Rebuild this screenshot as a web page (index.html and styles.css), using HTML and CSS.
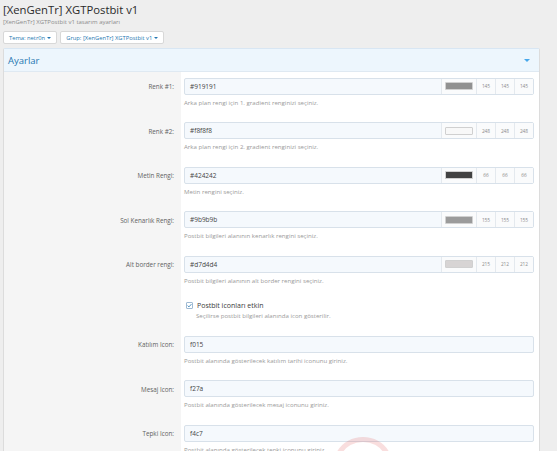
FILE: index.html
```html
<!DOCTYPE html>
<html lang="tr">
<head>
  <meta charset="UTF-8">
  <title>[XenGenTr] XGTPostbit v1</title>
  <link rel="stylesheet" href="styles.css">
</head>
<body>

  <div class="page">
    <h1 class="page-title">[XenGenTr] XGTPostbit v1</h1>
    <div class="page-desc">[XenGenTr] XGTPostbit v1 tasarım ayarları</div>

    <div class="filters">
      <span class="filter-btn">Tema: netr0n <i class="caret"></i></span>
      <span class="filter-btn">Grup: [XenGenTr] XGTPostbit v1 <i class="caret"></i></span>
    </div>

    <div class="block">
      <div class="block-header">
        <span>Ayarlar</span>
        <i class="caret caret-big"></i>
      </div>

      <div class="form-row">
        <div class="form-label">Renk #1:</div>
        <div class="form-field">
          <div class="input color-input">
            <span class="value">#919191</span>
            <span class="swatch-cell"><span class="swatch" style="background:#919191"></span></span>
            <span class="rgb">145</span><span class="rgb">145</span><span class="rgb">145</span>
          </div>
          <div class="help">Arka plan rengi için 1. gradient renginizi seçiniz.</div>
        </div>
      </div>

      <div class="form-row">
        <div class="form-label">Renk #2:</div>
        <div class="form-field">
          <div class="input color-input">
            <span class="value">#f8f8f8</span>
            <span class="swatch-cell"><span class="swatch" style="background:#f8f8f8"></span></span>
            <span class="rgb">248</span><span class="rgb">248</span><span class="rgb">248</span>
          </div>
          <div class="help">Arka plan rengi için 2. gradient renginizi seçiniz.</div>
        </div>
      </div>

      <div class="form-row">
        <div class="form-label">Metin Rengi:</div>
        <div class="form-field">
          <div class="input color-input">
            <span class="value">#424242</span>
            <span class="swatch-cell"><span class="swatch" style="background:#424242"></span></span>
            <span class="rgb">66</span><span class="rgb">66</span><span class="rgb">66</span>
          </div>
          <div class="help">Metin rengini seçiniz.</div>
        </div>
      </div>

      <div class="form-row">
        <div class="form-label">Sol Kenarlık Rengi:</div>
        <div class="form-field">
          <div class="input color-input">
            <span class="value">#9b9b9b</span>
            <span class="swatch-cell"><span class="swatch" style="background:#9b9b9b"></span></span>
            <span class="rgb">155</span><span class="rgb">155</span><span class="rgb">155</span>
          </div>
          <div class="help">Postbit bilgileri alanının kenarlık rengini seçiniz.</div>
        </div>
      </div>

      <div class="form-row">
        <div class="form-label">Alt border rengi:</div>
        <div class="form-field">
          <div class="input color-input">
            <span class="value">#d7d4d4</span>
            <span class="swatch-cell"><span class="swatch" style="background:#d7d4d4"></span></span>
            <span class="rgb">215</span><span class="rgb">212</span><span class="rgb">212</span>
          </div>
          <div class="help">Postbit bilgileri alanının alt border rengini seçiniz.</div>
        </div>
      </div>

      <div class="form-row check-row">
        <div class="form-label"></div>
        <div class="form-field">
          <label class="check">
            <span class="checkbox">
              <svg viewBox="0 0 8 8" width="7" height="7"><path d="M1.8 4.1 L3.4 5.6 L6.2 2.4" fill="none" stroke="#2577b1" stroke-width="0.9"/></svg>
            </span>
            <span>Postbit iconları etkin</span>
          </label>
          <div class="help check-help">Seçilirse postbit bilgileri alanında icon gösterilir.</div>
        </div>
      </div>

      <div class="form-row">
        <div class="form-label">Katılım Icon:</div>
        <div class="form-field">
          <div class="input"><span class="value">f015</span></div>
          <div class="help">Postbit alanında gösterilecek katılım tarihi iconunu giriniz.</div>
        </div>
      </div>

      <div class="form-row">
        <div class="form-label">Mesaj Icon:</div>
        <div class="form-field">
          <div class="input"><span class="value">f27a</span></div>
          <div class="help">Postbit alanında gösterilecek mesaj iconunu giriniz.</div>
        </div>
      </div>

      <div class="form-row">
        <div class="form-label">Tepki Icon:</div>
        <div class="form-field">
          <div class="input"><span class="value">f4c7</span></div>
          <div class="help">Postbit alanında gösterilecek tepki iconunu giriniz.</div>
        </div>
      </div>
    </div>
  </div>

  <svg class="watermark" width="56" height="22" viewBox="0 0 56 22">
    <path d="M4 22 C 14 4, 42 4, 52 22" fill="none" stroke="#e05a5a" stroke-width="5" opacity="0.2"/>
  </svg>

</body>
</html>
```

FILE: styles.css
```css
html, body {
  margin: 0;
  background: #eeeeee;
  font-family: "Open Sans", "Noto Sans", sans-serif;
  color: #141414;
  overflow: hidden;
}

.page {
  padding: 1px 17px 0 3px;
}

.page-title {
  margin: 0;
  font-size: 11.3px;
  font-weight: 400;
  line-height: 17px;
  color: #2a2a2a;
}

.page-desc {
  font-size: 6px;
  line-height: 9px;
  color: #8c8c8c;
}

.filters {
  display: flex;
  gap: 3px;
  margin-top: 4px;
}

.filter-btn {
  display: flex;
  align-items: center;
  gap: 2px;
  height: 11px;
  padding: 0 5px;
  background: #fff;
  border: 1px solid #d8d8d8;
  border-radius: 2px;
  font-size: 5.8px;
  color: #2577b1;
}

.caret {
  display: inline-block;
  width: 0;
  height: 0;
  border-left: 2px solid transparent;
  border-right: 2px solid transparent;
  border-top: 2.5px solid #2577b1;
}

.caret-big {
  border-left-width: 3px;
  border-right-width: 3px;
  border-top: 3.5px solid #47a7eb;
}

.block {
  margin-top: 4px;
  background: #f5f5f5;
  border: 1px solid #dcdcdc;
  border-top-color: #d8e6f3;
  border-radius: 2px;
}

.block-header {
  display: flex;
  align-items: center;
  justify-content: space-between;
  height: 22px;
  padding: 0 9px 0 4px;
  background: #edf6fd;
  border-bottom: 1px solid #dfe9f2;
  font-size: 9.5px;
  color: #2577b1;
}

.form-row {
  display: flex;
}

.form-label {
  width: 177px;
  flex-shrink: 0;
  box-sizing: border-box;
  padding: 6px 7px 0 0;
  text-align: right;
  font-size: 6.3px;
  line-height: 17px;
  color: #626262;
}

.form-field {
  flex: 1;
  background: #fff;
  padding: 5.5px 5px 10px 3px;
}

.input {
  display: flex;
  align-items: stretch;
  height: 17px;
  box-sizing: border-box;
  background: #f5f9fd;
  border: 1px solid #d8e1ea;
  border-radius: 2px;
  font-size: 6.5px;
}

.input .value {
  flex: 1;
  display: flex;
  align-items: center;
  padding-left: 5px;
  color: #444;
}

.swatch-cell {
  display: flex;
  align-items: center;
  padding: 0 3px;
  border-left: 1px solid #e4e9ee;
  background: #fafbfc;
}

.swatch {
  display: block;
  width: 28px;
  height: 8px;
  border: 1px solid #d0d0d0;
  box-sizing: border-box;
  border-radius: 1px;
}

.rgb {
  width: 18px;
  display: flex;
  align-items: center;
  justify-content: center;
  border-left: 1px solid #e4e9ee;
  background: #fafbfc;
  font-size: 4.8px;
  color: #8c8c8c;
}

.help {
  margin-top: 3px;
  font-size: 6.1px;
  line-height: 9px;
  color: #9a9a9a;
}

.check-row .form-field {
  padding: 6px 5px 10.5px 3px;
}

.check {
  display: flex;
  align-items: center;
  gap: 4px;
  padding-left: 2px;
  font-size: 7px;
  line-height: 10px;
  color: #3a3a3a;
}

.checkbox {
  display: flex;
  width: 7px;
  height: 7px;
  box-sizing: border-box;
  border: 1px solid #9fbad3;
  border-radius: 1px;
  background: #fff;
}

.checkbox svg {
  margin: -1px;
}

.check-help {
  margin-top: 0;
  padding-left: 12px;
}

.watermark {
  position: absolute;
  left: 335px;
  top: 431px;
}
```
